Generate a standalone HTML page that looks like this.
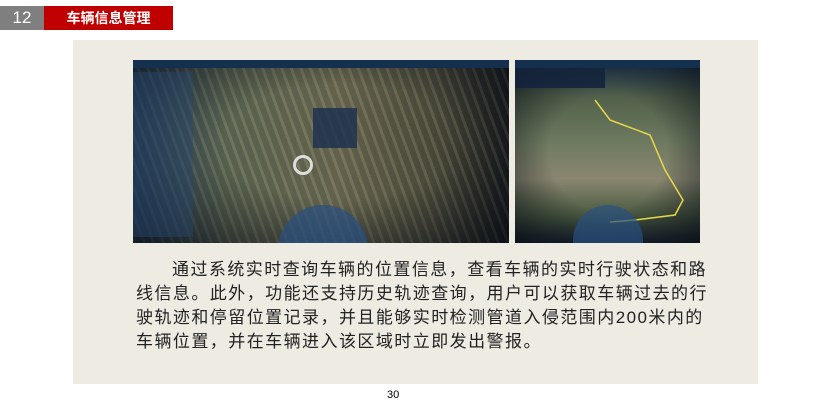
<!DOCTYPE html>
<html><head><meta charset="utf-8"><style>
body{margin:0;width:830px;height:400px;background:#fff;position:relative;overflow:hidden;font-family:"Liberation Sans","Noto Sans CJK SC",sans-serif}
.num{position:absolute;left:0;top:6px;width:44px;height:24px;background:#7f7f7f;color:#fff;font-size:17px;line-height:24px;text-align:center}
.ttl{position:absolute;left:44px;top:6px;width:129px;height:24px;background:#c00000;color:#fff;font-size:14px;font-weight:bold;line-height:24px;text-align:center}
.panel{position:absolute;left:73px;top:40px;width:685px;height:344px;background:#eeebe2}
.m1{position:absolute;left:133px;top:60px;width:376px;height:183px;overflow:hidden;background:
radial-gradient(ellipse at 55% 45%,rgba(0,0,0,0) 40%,rgba(5,10,20,.75) 100%),
repeating-linear-gradient(70deg,rgba(160,150,120,.25) 0 3px,rgba(60,60,50,.2) 3px 9px),
linear-gradient(90deg,#2c4a66 0,#5e6a55 25%,#6b6a52 55%,#4a4a3a 80%,#101418 100%)}
.m2{position:absolute;left:515px;top:60px;width:185px;height:183px;overflow:hidden;background:
radial-gradient(ellipse at 50% 50%,rgba(0,0,0,0) 45%,rgba(5,10,20,.7) 100%),
linear-gradient(180deg,#1d3552 0,#51604a 20%,#6e7a60 45%,#8a8670 65%,#4a5a40 85%,#1a2430 100%)}
.bar{position:absolute;left:0;top:0;right:0;height:8px;background:#15304f}
.txt{position:absolute;left:136px;top:258px;width:575px;font-size:17px;line-height:24px;color:#222;letter-spacing:1.45px;text-indent:36px}
.pg{position:absolute;left:387px;top:389px;font-size:11px;color:#000}
</style></head><body>
<div class="num">12</div><div class="ttl">车辆信息管理</div>
<div class="panel"></div>
<div class="m1"><div class="bar"></div>
<div style="position:absolute;left:180px;top:48px;width:44px;height:40px;background:rgba(30,50,80,.85)"></div>
<div style="position:absolute;left:160px;top:95px;width:14px;height:14px;border-radius:50%;border:3px solid #ddd"></div>
<div style="position:absolute;left:145px;top:145px;width:90px;height:45px;border-radius:45px 45px 0 0;background:rgba(40,80,130,.7)"></div>
<div style="position:absolute;left:0;top:12px;width:60px;height:165px;background:rgba(40,70,110,.45)"></div>
</div>
<div class="m2"><div class="bar"></div>
<div style="position:absolute;left:0;top:8px;width:90px;height:20px;background:rgba(20,35,60,.9)"></div>
<svg style="position:absolute;left:0;top:0" width="185" height="183"><path d="M80 40 L95 60 L135 75 L150 110 L168 140 L160 155 L120 160 L95 162" fill="none" stroke="#e6d84a" stroke-width="1.5"/></svg>
<div style="position:absolute;left:58px;top:145px;width:70px;height:38px;border-radius:35px 35px 0 0;background:rgba(40,80,130,.7)"></div>
</div>
<div class="txt">通过系统实时查询车辆的位置信息，查看车辆的实时行驶状态和路线信息。此外，功能还支持历史轨迹查询，用户可以获取车辆过去的行驶轨迹和停留位置记录，并且能够实时检测管道入侵范围内200米内的车辆位置，并在车辆进入该区域时立即发出警报。</div>
<div class="pg">30</div>
</body></html>
